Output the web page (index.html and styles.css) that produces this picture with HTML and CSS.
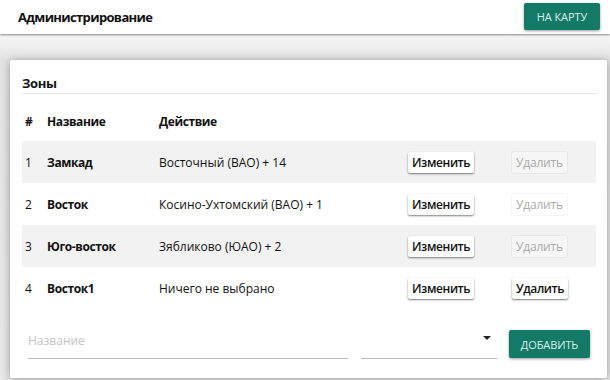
FILE: index.html
```html
<!DOCTYPE html>
<html lang="ru">
<head>
	<meta charset="UTF-8">
	<title>Администрирование</title>
	<link rel="stylesheet" href="styles.css">
</head>
<body>
	<header class="topbar">
		<h1 class="topbar-title">Администрирование</h1>
		<button class="btn btn-primary btn-map">НА КАРТУ</button>
	</header>
	<main class="page">
		<section class="card">
			<h2 class="card-title">Зоны</h2>
			<table class="zones">
				<thead>
					<tr>
						<th class="col-num">#</th>
						<th class="col-name">Название</th>
						<th class="col-act">Действие</th>
						<th class="col-edit"></th>
						<th class="col-del"></th>
					</tr>
				</thead>
				<tbody>
					<tr>
						<td>1</td>
						<td class="name">Замкад</td>
						<td>Восточный (ВАО) + 14</td>
						<td><button class="btn btn-flat">Изменить</button></td>
						<td><button class="btn btn-flat" disabled>Удалить</button></td>
					</tr>
					<tr>
						<td>2</td>
						<td class="name">Восток</td>
						<td>Косино-Ухтомский (ВАО) + 1</td>
						<td><button class="btn btn-flat">Изменить</button></td>
						<td><button class="btn btn-flat" disabled>Удалить</button></td>
					</tr>
					<tr>
						<td>3</td>
						<td class="name">Юго-восток</td>
						<td>Зябликово (ЮАО) + 2</td>
						<td><button class="btn btn-flat">Изменить</button></td>
						<td><button class="btn btn-flat" disabled>Удалить</button></td>
					</tr>
					<tr>
						<td>4</td>
						<td class="name">Восток1</td>
						<td>Ничего не выбрано</td>
						<td><button class="btn btn-flat">Изменить</button></td>
						<td><button class="btn btn-flat">Удалить</button></td>
					</tr>
				</tbody>
			</table>
			<form class="add-form" onsubmit="return false;">
				<input class="field field-name" type="text" placeholder="Название">
				<div class="field field-select">
					<span class="caret"></span>
				</div>
				<button class="btn btn-primary btn-add">ДОБАВИТЬ</button>
			</form>
		</section>
	</main>
</body>
</html>
```

FILE: styles.css
```css
* {
    margin: 0;
    padding: 0;
    box-sizing: border-box;
}
body {
    width: 610px;
    height: 380px;
    overflow: hidden;
    background: #ececec;
    font-family: "Open Sans", "Noto Sans", sans-serif;
    font-size: 12px;
    color: #111;
}
.topbar {
    position: relative;
    z-index: 2;
    height: 34px;
    display: flex;
    align-items: center;
    justify-content: space-between;
    padding: 0 10px 0 18px;
    background: #fff;
    box-shadow: 0 1px 2px rgba(0,0,0,0.45);
}
.topbar-title {
    font-size: 13px;
    font-weight: 700;
    letter-spacing: -0.65px;
}
.btn {
    font-family: inherit;
    border: none;
    cursor: pointer;
}
.btn-primary {
    background: #137a67;
    color: #d9efe9;
    border-radius: 2px;
    box-shadow: 0 1px 3px rgba(0,0,0,0.4);
    font-size: 11px;
    letter-spacing: -0.1px;
}
.btn-map {
    width: 76px;
    height: 27px;
    margin-top: -1px;
}
.page {
    padding: 26px 3px 0 10px;
    background: linear-gradient(#f6f6f6, #e4e4e4 26px, #e8e8e8);
    height: 346px;
}
.card {
    background: #fff;
    border-radius: 2px;
    box-shadow: 0 1px 10px rgba(0,0,0,0.35);
    padding: 14px 11px 19px 12px;
}
.card-title {
    font-size: 13px;
    font-weight: 700;
    letter-spacing: -0.4px;
    line-height: 19px;
    height: 20px;
    border-bottom: 1px solid #e8e8e8;
}
.zones {
    width: 100%;
    border-collapse: collapse;
}
.zones th {
    text-align: left;
    font-weight: 700;
    letter-spacing: -0.4px;
    height: 47px;
    padding-top: 7px;
}
.zones td {
    height: 42px;
}
.zones th, .zones td {
    padding-left: 3px;
}
.zones .col-num { width: 22px; }
.zones .col-name { width: 112px; }
.zones .col-act { width: 249px; }
.zones .col-edit { width: 104px; }
.zones td.name {
    font-weight: 700;
    letter-spacing: -0.4px;
}
.zones tbody tr:nth-child(odd) {
    background: #f2f2f2;
}
.btn-flat {
    height: 21px;
    padding: 0 4px;
    background: #fff;
    color: #111;
    font-size: 12px;
    font-weight: 600;
    letter-spacing: -0.4px;
    border-radius: 2px;
    box-shadow: 0 1px 2px rgba(0,0,0,0.5);
}
.btn-flat:disabled {
    background: rgba(255,255,255,0.3);
    color: #aaa;
    font-weight: 400;
    letter-spacing: -0.2px;
    box-shadow: 0 0 0 1px rgba(0,0,0,0.04);
    cursor: default;
}
.add-form {
    display: flex;
    align-items: flex-end;
    margin-top: 19px;
    padding-left: 6px;
}
.field {
    height: 31px;
    border: none;
    border-bottom: 1px solid #bbb;
    font-family: inherit;
    font-size: 12px;
    background: transparent;
    outline: none;
}
.field-name {
    width: 320px;
    padding-bottom: 5px;
}
.field-name::placeholder {
    color: #c4c4c4;
}
.field-select {
    position: relative;
    width: 136px;
    margin-left: 13px;
}
.caret {
    position: absolute;
    right: 6px;
    top: 8px;
    border-left: 4px solid transparent;
    border-right: 4px solid transparent;
    border-top: 4px solid #222;
}
.btn-add {
    width: 81px;
    height: 28px;
    margin-left: 12px;
    margin-bottom: 1px;
}
```
